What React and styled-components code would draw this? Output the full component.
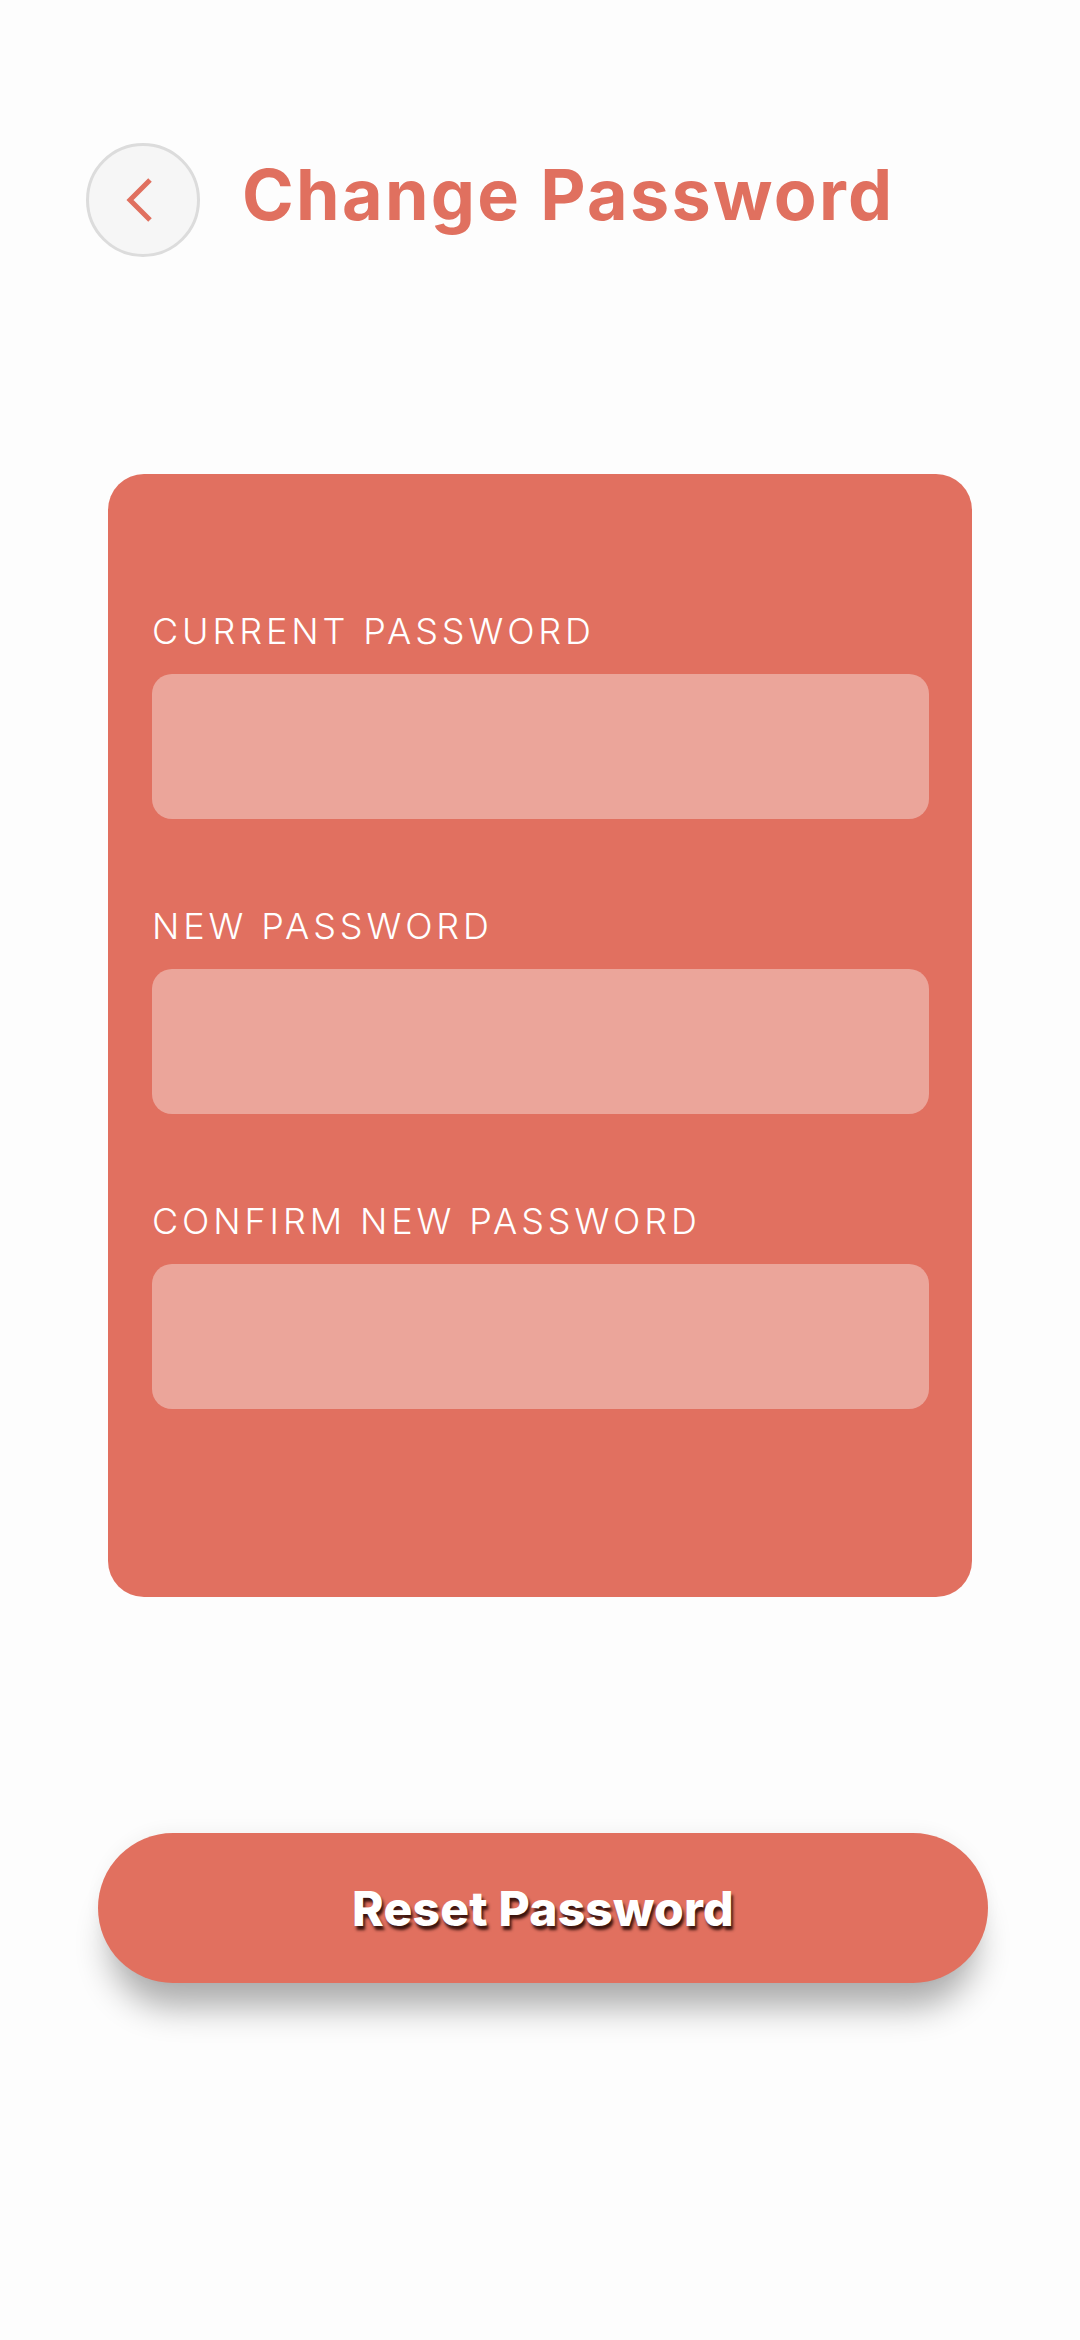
import styled, { createGlobalStyle } from "styled-components"

const GlobalStyle = createGlobalStyle`
    body {
        margin: 0;
        background: #fdfdfd;
        font-family: 'Inter', 'Liberation Sans', sans-serif;
    }
`

const Page = styled.div`
    min-height: 2340px;
    display: flex;
    flex-direction: column;
    padding-top: 143px;
    box-sizing: border-box;
`

const Header = styled.div`
    display: flex;
    align-items: center;
    gap: 42px;
    padding-left: 86px;
`

const BackButton = styled.button`
    width: 114px;
    height: 114px;
    border-radius: 50%;
    border: 3px solid #dcdcdc;
    background: #f6f6f6;
    display: flex;
    align-items: center;
    justify-content: center;
    padding: 0 6px 0 0;
    box-sizing: border-box;
    cursor: pointer;
`

const Title = styled.h1`
    margin: 0 0 10px 0;
    font-family: 'Inter', sans-serif;
    font-weight: 650;
    font-size: 70px;
    line-height: 1;
    letter-spacing: 2.3px;
    color: #e0705f;
`

const Card = styled.div`
    margin: 217px 108px 0 108px;
    background: #e17060;
    border-radius: 36px;
    padding: 139px 43px 188px 44px;
    display: flex;
    flex-direction: column;
    gap: 89px;
`

const Field = styled.div`
    display: flex;
    flex-direction: column;
    gap: 25px;
`

const Label = styled.label`
    font-family: 'Inter', sans-serif;
    font-weight: 300;
    font-size: 36px;
    line-height: 1;
    letter-spacing: 0.108em;
    color: #ffffff;
`

const Input = styled.input`
    height: 145px;
    border: none;
    border-radius: 20px;
    background: #eba59a;
    padding: 0 30px;
    font-size: 36px;
    color: #fff;
    outline: none;
    box-sizing: border-box;
`

const ResetButton = styled.button`
    margin: 236px 0 0 98px;
    width: 890px;
    height: 150px;
    border: none;
    border-radius: 75px;
    background: #e1705f;
    box-shadow: 0 36px 34px -12px rgba(0, 0, 0, 0.32), 0 -4px 16px rgba(0, 0, 0, 0.04);
    font-family: 'Inter', sans-serif;
    font-weight: 800;
    font-size: 48px;
    letter-spacing: 0.2px;
    color: #ffffff;
    text-shadow: 2px 4px 3px rgba(30, 5, 0, 0.85);
    cursor: pointer;
`

const ChevronLeft = () => (
    <svg width="32" height="48" viewBox="0 0 32 48">
        <polyline points="26,4 6,24 26,44" fill="none" stroke="#e0705f" strokeWidth="5" />
    </svg>
)

const fields = ['CURRENT PASSWORD', 'NEW PASSWORD', 'CONFIRM NEW PASSWORD']

export default function App() {
    return(
        <Page>
            <GlobalStyle />
            <Header>
                <BackButton aria-label="Back">
                    <ChevronLeft />
                </BackButton>
                <Title>Change Password</Title>
            </Header>
            <Card>
                {fields.map((label) => (
                    <Field key={label}>
                        <Label>{label}</Label>
                        <Input type="password" />
                    </Field>
                ))}
            </Card>
            <ResetButton>Reset Password</ResetButton>
        </Page>
    )
}
